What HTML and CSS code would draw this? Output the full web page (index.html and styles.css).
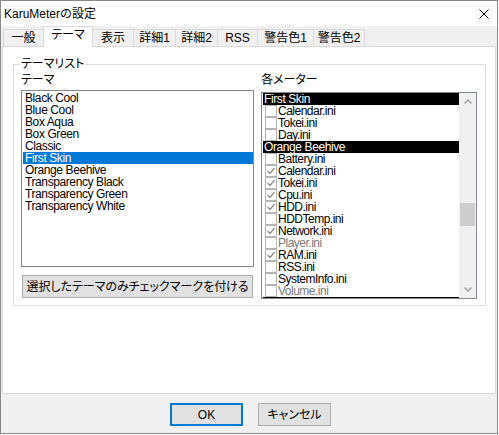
FILE: index.html
```html
<!DOCTYPE html>
<html lang="ja">
<head>
<meta charset="utf-8">
<title>KaruMeterの設定</title>
<link rel="stylesheet" href="styles.css">
</head>
<body>
<div class="window">
  <div class="titlebar">
    <span class="title">KaruMeterの設定</span>
    <svg class="close" width="10" height="10" viewBox="0 0 10 10"><path d="M0.5 0.5 L9.5 9.5 M9.5 0.5 L0.5 9.5" stroke="#000" stroke-width="1" fill="none"/></svg>
  </div>
  <div class="tabs">
    <div class="tab">一般</div>
    <div class="tab active">テーマ</div>
    <div class="tab">表示</div>
    <div class="tab">詳細1</div>
    <div class="tab">詳細2</div>
    <div class="tab">RSS</div>
    <div class="tab">警告色1</div>
    <div class="tab last">警告色2</div>
  </div>
  <div class="panel">
    <fieldset class="group">
      <legend>テーマリスト</legend>
      <div class="cols">
        <div class="col-left">
          <div class="label">テーマ</div>
          <ul class="themes">
            <li>Black Cool</li>
            <li>Blue Cool</li>
            <li>Box Aqua</li>
            <li>Box Green</li>
            <li>Classic</li>
            <li class="sel">First Skin</li>
            <li>Orange Beehive</li>
            <li>Transparency Black</li>
            <li>Transparency Green</li>
            <li>Transparency White</li>
          </ul>
          <button class="btn wide">選択したテーマのみチェックマークを付ける</button>
        </div>
        <div class="col-right">
          <div class="label">各メーター</div>
          <div class="meters">
            <div class="rows">
              <div class="hdr">First Skin</div>
              <div class="row"><span class="cb"></span>Calendar.ini</div>
              <div class="row"><span class="cb"></span>Tokei.ini</div>
              <div class="row"><span class="cb"></span>Day.ini</div>
              <div class="hdr">Orange Beehive</div>
              <div class="row"><span class="cb"></span>Battery.ini</div>
              <div class="row"><span class="cb"><svg width="10" height="10" viewBox="0 0 10 10"><path d="M1.5 5 L4 7.5 L8.5 2" stroke="#8a8a8a" stroke-width="1.2" fill="none"/></svg></span>Calendar.ini</div>
              <div class="row"><span class="cb"><svg width="10" height="10" viewBox="0 0 10 10"><path d="M1.5 5 L4 7.5 L8.5 2" stroke="#8a8a8a" stroke-width="1.2" fill="none"/></svg></span>Tokei.ini</div>
              <div class="row"><span class="cb"><svg width="10" height="10" viewBox="0 0 10 10"><path d="M1.5 5 L4 7.5 L8.5 2" stroke="#8a8a8a" stroke-width="1.2" fill="none"/></svg></span>Cpu.ini</div>
              <div class="row"><span class="cb"><svg width="10" height="10" viewBox="0 0 10 10"><path d="M1.5 5 L4 7.5 L8.5 2" stroke="#8a8a8a" stroke-width="1.2" fill="none"/></svg></span>HDD.ini</div>
              <div class="row"><span class="cb"></span>HDDTemp.ini</div>
              <div class="row"><span class="cb"><svg width="10" height="10" viewBox="0 0 10 10"><path d="M1.5 5 L4 7.5 L8.5 2" stroke="#8a8a8a" stroke-width="1.2" fill="none"/></svg></span>Network.ini</div>
              <div class="row dim"><span class="cb"></span>Player.ini</div>
              <div class="row"><span class="cb"><svg width="10" height="10" viewBox="0 0 10 10"><path d="M1.5 5 L4 7.5 L8.5 2" stroke="#8a8a8a" stroke-width="1.2" fill="none"/></svg></span>RAM.ini</div>
              <div class="row"><span class="cb"></span>RSS.ini</div>
              <div class="row"><span class="cb"></span>SystemInfo.ini</div>
              <div class="row dim"><span class="cb"></span>Volume.ini</div>
              <div class="hdr">Transparency Black</div>
              <div class="row"><span class="cb"></span>Calendar.ini</div>
            </div>
            <div class="scrollbar">
              <div class="arrow"><svg width="8" height="5" viewBox="0 0 8 5"><path d="M0.5 4.5 L4 1 L7.5 4.5" stroke="#a0a0a0" stroke-width="1.5" fill="none"/></svg></div>
              <div class="track"><div class="thumb"></div></div>
              <div class="arrow"><svg width="8" height="5" viewBox="0 0 8 5"><path d="M0.5 0.5 L4 4 L7.5 0.5" stroke="#a0a0a0" stroke-width="1.5" fill="none"/></svg></div>
            </div>
          </div>
        </div>
      </div>
    </fieldset>
  </div>
  <div class="footer">
    <button class="btn ok">OK</button>
    <button class="btn">キャンセル</button>
  </div>
</div>
</body>
</html>
```
FILE: styles.css
```css
* { box-sizing: border-box; }
html, body { margin: 0; padding: 0; background: #fff; }
body {
  font-family: "Liberation Sans", "Noto Sans CJK JP", sans-serif;
  font-size: 12px;
  color: #000;
}
.window {
  width: 498px;
  height: 434px;
  border: 1px solid #888;
  background: #f0f0f0;
  display: flex;
  flex-direction: column;
}
.titlebar {
  height: 25px;
  flex: none;
  background: #fff;
  display: flex;
  align-items: center;
  justify-content: space-between;
  padding: 0 8px 0 3px;
}
.title { line-height: 24px; font-size: 12px; }
.close { display: block; }

.tabs {
  height: 20px;
  flex: none;
  display: grid;
  grid-template-columns: 40px 49px 41px 42px 42px 40px 56px 52px;
  align-items: end;
  padding-left: 2px;
}
.tab {
  height: 17px;
  border: 1px solid #d9d9d9;
  border-right: none;
  border-bottom: none;
  background: #f0f0f0;
  text-align: center;
  line-height: 16px;
  white-space: nowrap;
  font-feature-settings: "palt";
}
.tab.last { border-right: 1px solid #d9d9d9; }
.tab.active {
  height: 21px;
  margin-bottom: -1px;
  margin-right: -1px;
  border-right: 1px solid #d9d9d9;
  background: #fff;
  padding-bottom: 4px;
  position: relative;
  z-index: 1;
}

.panel {
  height: 348px;
  flex: none;
  margin: 0 1px;
  background: #fff;
  border: 1px solid #d9d9d9;
  padding: 11px 9px 0 10px;
}
.group {
  margin: 0;
  min-width: 0;
  border: 1px solid #dcdcdc;
  padding: 4px 8px 6px 7px;
}
.group legend {
  padding: 0 1px;
  margin-left: -1px;
  line-height: 12px;
  font-feature-settings: "palt";
}
.cols {
  display: grid;
  grid-template-columns: 233px 216px;
  column-gap: 7px;
}
.label {
  line-height: 12px;
  height: 12px;
  font-feature-settings: "palt";
  margin-bottom: 4px;
}
.col-right .label { margin-bottom: 6px; }

.themes {
  list-style: none;
  margin: 0;
  height: 177px;
  padding: 1px 0 0 1px;
  border: 1px solid #828790;
  background: #fff;
  overflow: hidden;
}
.themes li {
  height: 12px;
  line-height: 12px;
  padding-left: 2px;
  white-space: nowrap;
  letter-spacing: -0.4px;
}
.themes li.sel { background: #0078d7; color: #fff; }

.btn {
  font-family: inherit;
  font-size: 12px;
  color: #000;
  background: #e1e1e1;
  border: 1px solid #adadad;
  padding: 0;
  height: 23px;
  line-height: 20px;
  font-feature-settings: "palt";
}
.btn.wide {
  display: block;
  width: 231px;
  margin: 8px 0 0 1px;
}

.meters {
  display: flex;
  height: 207px;
  border: 1px solid #828790;
  background: #fff;
  overflow: hidden;
}
.rows {
  flex: 1;
  min-width: 0;
  padding-left: 1px;
  overflow: hidden;
}
.hdr {
  height: 12px;
  line-height: 12px;
  background: #000;
  color: #fff;
  padding-left: 1px;
  white-space: nowrap;
  letter-spacing: -0.4px;
}
.row {
  height: 12px;
  line-height: 12px;
  display: flex;
  align-items: flex-start;
  white-space: nowrap;
  letter-spacing: -0.5px;
}
.row.dim { color: #7a7a7a; }
.cb {
  flex: none;
  width: 12px;
  height: 12px;
  border: 1px solid #b4b4b4;
  margin: 0 1px 0 2px;
  display: flex;
  align-items: center;
  justify-content: center;
  background: #fff;
}
.cb svg { display: block; }

.scrollbar {
  flex: none;
  width: 17px;
  background: #f0f0f0;
  display: flex;
  flex-direction: column;
}
.arrow {
  height: 17px;
  display: flex;
  align-items: center;
  justify-content: center;
}
.arrow svg { display: block; }
.track { flex: 1; }
.thumb {
  margin: 93px 1px 0 1px;
  height: 23px;
  background: #cdcdcd;
}

.footer {
  flex: 1;
  display: flex;
  justify-content: center;
  align-items: flex-start;
  gap: 15px;
  padding: 9px 0 0 3px;
}
.footer .btn { width: 73px; }
.btn.ok { border: 2px solid #0078d7; line-height: 18px; }
```
